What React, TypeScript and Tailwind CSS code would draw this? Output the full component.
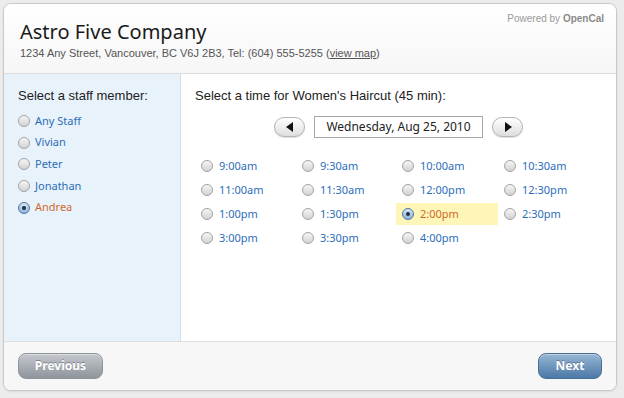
const staff = ["Any Staff", "Vivian", "Peter", "Jonathan", "Andrea"];
const selectedStaff = "Andrea";

const times = [
  "9:00am", "9:30am", "10:00am", "10:30am",
  "11:00am", "11:30am", "12:00pm", "12:30pm",
  "1:00pm", "1:30pm", "2:00pm", "2:30pm",
  "3:00pm", "3:30pm", "4:00pm",
];
const selectedTime = "2:00pm";

const Radio = ({ checked }: { checked: boolean }) => (
  <span
    className={`w-[12px] h-[12px] shrink-0 rounded-full border flex items-center justify-center ${
      checked
        ? "border-[#4d74a0] bg-gradient-to-b from-[#d6e6f6] to-[#8fb3da]"
        : "border-[#a3a3a3] bg-gradient-to-b from-[#f6f6f6] to-[#d2d2d2]"
    }`}
  >
    {checked && <span className="w-[4px] h-[4px] rounded-full bg-[#1c2f4a]" />}
  </span>
);

const ArrowButton = ({ dir }: { dir: "left" | "right" }) => (
  <button className="w-[31px] h-[20px] rounded-full border border-[#b4b4b4] bg-gradient-to-b from-white to-[#dedede] flex items-center justify-center shadow-[0_1px_1px_rgba(0,0,0,0.12)]">
    <svg width="8" height="10" viewBox="0 0 8 10">
      {dir === "left" ? (
        <path d="M7 0 L7 10 L0 5 Z" fill="#111" />
      ) : (
        <path d="M1 0 L1 10 L8 5 Z" fill="#111" />
      )}
    </svg>
  </button>
);

export default function App() {
  return (
    <div className="w-[624px] h-[398px] bg-[#ececec] pt-[3px] pl-[3px]">
      <div className="w-[614px] h-[388px] rounded-[8px] border border-[#c9c9c9] bg-white overflow-hidden flex flex-col shadow-[0_1px_2px_rgba(0,0,0,0.08)]">
        {/* header */}
        <div className="h-[70px] shrink-0 border-b border-[#dcdcdc] bg-gradient-to-b from-white to-[#f6f6f6] pl-[16px] pr-[12px] flex justify-between">
          <div>
            <h1 className="mt-[15px] text-[20px] leading-[26px] text-[#1a1a1a] font-['Noto_Sans',sans-serif]">
              Astro Five Company
            </h1>
            <p className="mt-[1px] text-[11px] leading-[14px] text-[#555] font-['Liberation_Sans',Arial,sans-serif]">
              1234 Any Street, Vancouver, BC V6J 2B3, Tel: (604) 555-5255 (
              <span className="underline">view map</span>)
            </p>
          </div>
          <p className="mt-[9px] text-[10px] leading-[12px] text-[#9a9a9a] font-['Liberation_Sans',Arial,sans-serif]">
            Powered by <span className="font-bold text-[#8a8a8a]">OpenCal</span>
          </p>
        </div>

        {/* body */}
        <div className="h-[267px] shrink-0 flex">
          <div className="w-[177px] shrink-0 bg-[#e8f2fb] border-r border-[#d5dfe8] pl-[14px] pt-[14px]">
            <h2 className="text-[13px] leading-[16px] text-[#222] font-['Liberation_Sans',Arial,sans-serif]">
              Select a staff member:
            </h2>
            <ul className="mt-[6px] flex flex-col">
              {staff.map((s) => (
                <li key={s} className="h-[21.7px] flex items-center gap-[5px]">
                  <Radio checked={s === selectedStaff} />
                  <span
                    className={`text-[11px] font-['Noto_Sans',sans-serif] ${
                      s === selectedStaff ? "text-[#cf6a2c]" : "text-[#2d6db8]"
                    }`}
                  >
                    {s}
                  </span>
                </li>
              ))}
            </ul>
          </div>

          <div className="flex-1 pl-[14px] pt-[14px]">
            <h2 className="text-[13px] leading-[16px] text-[#222] font-['Liberation_Sans',Arial,sans-serif]">
              Select a time for Women's Haircut (45 min):
            </h2>
            <div className="mt-[12px] ml-[79px] flex items-center gap-[9px]">
              <ArrowButton dir="left" />
              <div className="w-[169px] h-[22px] border border-[#a8a8a8] bg-white flex items-center justify-center text-[12px] text-[#222] font-['Noto_Sans',sans-serif]">
                Wednesday, Aug 25, 2010
              </div>
              <ArrowButton dir="right" />
            </div>
            <div className="mt-[17px] grid grid-cols-[101px_100px_102px_101px] gap-y-[2px]">
              {times.map((t) => {
                const on = t === selectedTime;
                return (
                  <div
                    key={t}
                    className={`h-[22px] flex items-center gap-[6px] pl-[6px] ${on ? "bg-[#fdf6b8]" : ""}`}
                  >
                    <Radio checked={on} />
                    <span
                      className={`text-[11px] font-['Noto_Sans',sans-serif] ${
                        on ? "text-[#cf6a2c]" : "text-[#2d6db8]"
                      }`}
                    >
                      {t}
                    </span>
                  </div>
                );
              })}
            </div>
          </div>
        </div>

        {/* footer */}
        <div className="flex-1 border-t border-[#dedede] bg-[#f7f7f7] px-[14px] flex items-center justify-between">
          <button className="w-[85px] h-[26px] rounded-[8px] border border-[#8e939a] bg-gradient-to-b from-[#c4c8cd] to-[#8f959d] text-white text-[12px] font-bold font-['Noto_Sans',sans-serif] [text-shadow:0_-1px_0_rgba(0,0,0,0.3)] shadow-[inset_0_1px_0_rgba(255,255,255,0.4)]">
            Previous
          </button>
          <button className="w-[64px] h-[26px] rounded-[8px] border border-[#4a6f96] bg-gradient-to-b from-[#97b6d4] to-[#4c79a6] text-white text-[12px] font-bold font-['Noto_Sans',sans-serif] [text-shadow:0_-1px_0_rgba(0,0,0,0.3)] shadow-[inset_0_1px_0_rgba(255,255,255,0.4)]">
            Next
          </button>
        </div>
      </div>
    </div>
  );
}
